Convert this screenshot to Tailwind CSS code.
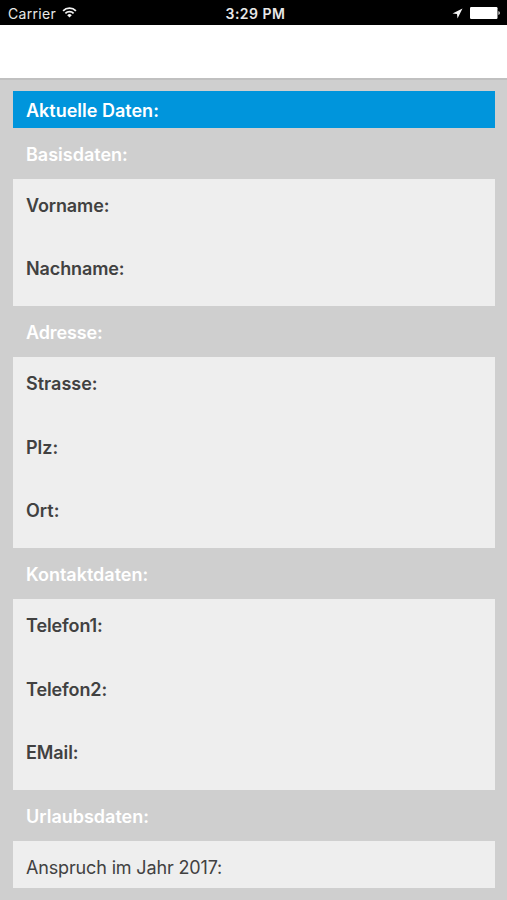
<!DOCTYPE html>
<html lang="de"><head><meta charset="utf-8"><title>Aktuelle Daten</title>
<script src="https://cdn.jsdelivr.net/npm/@tailwindcss/browser@4"></script></head>
<body class="w-[507px] h-[900px] overflow-hidden bg-[#cfcfcf] font-['Inter',sans-serif] text-[18px] font-semibold text-[#414141] flex flex-col">
<header class="h-[25px] shrink-0 bg-black text-[#e8e8e8] grid grid-cols-3 items-center pl-2 pr-[7px] pt-[2px] text-[14px]">
<div class="flex items-center gap-[6px] font-normal"><span class="tracking-[0.3px]">Carrier</span>
<svg class="w-[15px] h-[11px] relative -top-px" viewBox="0 0 16 12" fill="none" stroke="#f4f4f4" stroke-width="1.9"><path d="M1 4.2a10 10 0 0 1 14 0M3.5 6.9a6.4 6.4 0 0 1 9 0"/><path d="M8 11.5L5.5 9a3.5 3.5 0 0 1 5 0z" fill="#f4f4f4" stroke="none"/></svg></div>
<div class="text-center pl-[3px] tracking-[0.5px]">3:29 PM</div>
<div class="flex items-center justify-end gap-[7px] pb-px">
<svg class="w-[11px] h-[11px]" viewBox="0 0 11 11"><path d="M10.5 .5L5.5 10.5L5 6L.5 5.5z" fill="#f4f4f4"/></svg>
<svg class="w-[30px] h-3" viewBox="0 0 30 12" fill="white"><rect width="27.5" height="12" rx="1.2"/><path d="M28.5 4a2.2 2.2 0 0 1 0 4z"/></svg></div>
</header>
<nav class="h-[55px] shrink-0 bg-white border-b-2 border-[#c0c0c0]"></nav>
<main class="pl-[13px] pr-[12px] pt-[11px] flex flex-col">
<h1 class="h-[37px] shrink-0 bg-[#0095dc] text-white px-[13px] pt-px flex items-center">Aktuelle Daten:</h1>
<h2 class="h-[51px] px-[13px] pt-px flex items-center text-white">Basisdaten:</h2>
<section class="h-[127px] bg-[#eee] px-[13px] pt-[13px] leading-[27px] flex flex-col gap-[36px] tracking-[-0.12px]"><p>Vorname:</p><p>Nachname:</p></section>
<h2 class="h-[51px] px-[13px] pt-px flex items-center text-white tracking-[-0.12px]">Adresse:</h2>
<section class="h-[191px] bg-[#eee] px-[13px] pt-[13px] leading-[27px] flex flex-col gap-[36.5px]"><p>Strasse:</p><p>Plz:</p><p>Ort:</p></section>
<h2 class="h-[51px] px-[13px] pt-px flex items-center text-white">Kontaktdaten:</h2>
<section class="h-[191px] bg-[#eee] px-[13px] pt-[13px] leading-[27px] flex flex-col gap-[36.5px] tracking-[-0.1px]"><p>Telefon1:</p><p>Telefon2:</p><p>EMail:</p></section>
<h2 class="h-[51px] px-[13px] pt-px flex items-center text-white">Urlaubsdaten:</h2>
<section class="h-[47px] bg-[#eee] px-[13px] pt-[13px] leading-[27px] font-normal tracking-[-0.15px]"><p>Anspruch im Jahr 2017:</p></section>
</main></body></html>
